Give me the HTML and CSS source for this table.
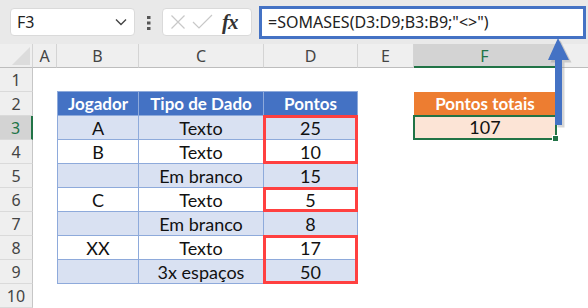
FILE: index.html
```html
<!DOCTYPE html>
<html>
<head>
    <meta charset="utf-8">
    <title>SOMASES - diferente de vazio</title>
    <link rel="stylesheet" href="styles.css">
</head>
<body>
    <div class="toolbar">
        <div class="namebox">
            <span>F3</span>
            <svg class="chevron" width="12" height="8" viewBox="0 0 12 8"><path d="M1 1.5 L6 6.5 L11 1.5" fill="none" stroke="#444" stroke-width="1.4"/></svg>
        </div>
        <svg class="dots" width="4" height="14" viewBox="0 0 4 14"><rect x="0" y="0" width="3.5" height="3" fill="#555"/><rect x="0" y="5.5" width="3.5" height="3" fill="#555"/><rect x="0" y="11" width="3.5" height="3" fill="#555"/></svg>
        <div class="fxbox">
            <svg width="16" height="16" viewBox="0 0 16 16"><path d="M1.5 1.5 L14.5 14.5 M14.5 1.5 L1.5 14.5" stroke="#c8c8c8" stroke-width="1.2"/></svg>
            <svg width="21" height="16" viewBox="0 0 21 16"><path d="M1 8 L7 14 L20 1" fill="none" stroke="#c8c8c8" stroke-width="1.2"/></svg>
            <span class="fx">fx</span>
        </div>
        <div class="formula">=SOMASES(D3:D9;B3:B9;"&lt;&gt;")</div>
    </div>

    <div class="sheet">
        <div class="corner"><svg width="26" height="18" viewBox="0 0 26 18"><path d="M26 0 L26 18 L8 18 Z" fill="#dcdcdc"/></svg></div>
        <div class="colhead">A</div>
        <div class="colhead">B</div>
        <div class="colhead">C</div>
        <div class="colhead">D</div>
        <div class="colhead">E</div>
        <div class="colhead active">F</div>
        <div class="colhead last"></div>

        <!-- linha 1 -->
        <div class="rowhead">1</div>
        <div></div><div></div><div></div><div></div><div></div><div></div><div></div>

        <!-- linha 2: cabeçalhos -->
        <div class="rowhead">2</div>
        <div></div>
        <div class="cell th first top">Jogador</div>
        <div class="cell th top">Tipo de Dado</div>
        <div class="cell th top">Pontos</div>
        <div></div>
        <div class="total-head">Pontos totais</div>
        <div></div>

        <div class="rowhead active">3</div>
        <div></div>
        <div class="cell band first">A</div>
        <div class="cell band">Texto</div>
        <div class="cell band hl hl-top">25</div>
        <div></div>
        <div class="total-val">107</div>
        <div></div>

        <div class="rowhead">4</div>
        <div></div>
        <div class="cell first">B</div>
        <div class="cell">Texto</div>
        <div class="cell hl hl-bottom">10</div>
        <div></div><div></div><div></div>

        <div class="rowhead">5</div>
        <div></div>
        <div class="cell band first"></div>
        <div class="cell band">Em branco</div>
        <div class="cell band">15</div>
        <div></div><div></div><div></div>

        <div class="rowhead">6</div>
        <div></div>
        <div class="cell first">C</div>
        <div class="cell">Texto</div>
        <div class="cell hl">5</div>
        <div></div><div></div><div></div>

        <div class="rowhead">7</div>
        <div></div>
        <div class="cell band first"></div>
        <div class="cell band">Em branco</div>
        <div class="cell band">8</div>
        <div></div><div></div><div></div>

        <div class="rowhead">8</div>
        <div></div>
        <div class="cell first">XX</div>
        <div class="cell">Texto</div>
        <div class="cell hl hl-top">17</div>
        <div></div><div></div><div></div>

        <div class="rowhead">9</div>
        <div></div>
        <div class="cell band first"></div>
        <div class="cell band">3x espaços</div>
        <div class="cell band hl hl-bottom">50</div>
        <div></div><div></div><div></div>

        <div class="rowhead">10</div>
        <div></div><div></div><div></div><div></div><div></div><div></div><div></div>
    </div>

    <!-- seta apontando para a fórmula -->
    <svg class="arrow" width="40" height="100" viewBox="0 0 40 100">
        <path d="M19 9 L30 31 L23 31 L23 96 L16 96 L16 31 L9 31 Z" fill="#8a8a8a" opacity="0.35" transform="translate(1.5 1.5)"/>
        <path d="M18 8 L29 30 L22 30 L22 95 L15 95 L15 30 L8 30 Z" fill="#4472c4"/>
    </svg>
</body>
</html>
```

FILE: styles.css
```css
/* Planilha estilo Excel */
body {
    margin: 0;
    width: 588px;
    height: 308px;
    overflow: hidden;
    position: relative;
    background: #fff;
    font-family: "Noto Sans", sans-serif;
}

.toolbar {
    height: 44px;
    background-color: #e9e9e9;
    display: flex;
    align-items: flex-start;
    padding-top: 8px;
    box-sizing: border-box;
}

.namebox {
    margin-left: 10px;
    width: 125px;
    height: 28px;
    background: #fff;
    border: 1px solid #dadada;
    border-radius: 4px;
    box-sizing: border-box;
    display: flex;
    align-items: center;
    justify-content: space-between;
    padding: 0 7px 0 6px;
    font-size: 16px;
    color: #222;
}

.dots {
    margin: 8px 11px 0 12px;
}

.fxbox {
    width: 90px;
    height: 28px;
    background: #fff;
    border: 1px solid #dadada;
    border-radius: 4px;
    box-sizing: border-box;
    display: flex;
    align-items: center;
    gap: 6px;
    padding-left: 7px;
}

.fx {
    font-family: "Liberation Serif", serif;
    font-style: italic;
    font-weight: bold;
    font-size: 21px;
    color: #333;
    margin-left: 3px;
    letter-spacing: -1px;
}

.formula {
    margin-left: 7px;
    flex: 1;
    margin-right: 2px;
    height: 33px;
    margin-top: -2px;
    background: #fff;
    border: 3px solid #4472c4;
    box-sizing: border-box;
    padding-left: 6px;
    font-size: 16px;
    line-height: 26px;
    color: #222;
}

.sheet {
    display: grid;
    grid-template-columns: 33px 24px 82px 125px 94px 56px 142px 1fr;
    grid-template-rows: repeat(11, 24px);
}

.corner {
    background: #efefef;
    border-right: 1px solid #d4d4d4;
    border-bottom: 1px solid #bdbdbd;
    display: flex;
    align-items: flex-end;
    justify-content: flex-end;
    padding: 0 2px 2px 0;
    box-sizing: border-box;
}

.colhead {
    background: #efefef;
    border-right: 1px solid #d4d4d4;
    border-bottom: 1px solid #bdbdbd;
    text-align: center;
    font-size: 16px;
    line-height: 24px;
    color: #444;
}

.colhead.last {
    border-right: none;
}

.colhead.active {
    background: #d3d3d3;
    color: #217346;
    border-bottom: 2px solid #217346;
}

.rowhead {
    background: #efefef;
    border-right: 1px solid #c6c6c6;
    border-bottom: 1px solid #dadada;
    text-align: center;
    font-size: 16px;
    line-height: 24px;
    color: #444;
}

.rowhead.active {
    background: #d3d3d3;
    color: #217346;
    border-right: 2px solid #217346;
}

/* tabela de dados */
.cell {
    position: relative;
    border-right: 1px solid #8eaadb;
    border-bottom: 1px solid #8eaadb;
    text-align: center;
    font-family: Lato, sans-serif;
    font-size: 18px;
    line-height: 24px;
    color: #111;
}

.cell.first {
    border-left: 1px solid #8eaadb;
}

.cell.top {
    border-top: 1px solid #8eaadb;
    margin-top: -1px;
}

.cell.band {
    background-color: #d9e1f2;
}

.cell.th {
    background-color: #4472c4;
    color: #fff;
    font-weight: bold;
    font-size: 17px;
}

/* contornos vermelhos */
.hl::after {
    content: "";
    position: absolute;
    left: -1px;
    right: -1px;
    top: -1px;
    bottom: -1px;
    border: 3px solid #ff4040;
}

.hl-top::after {
    border-bottom: none;
    bottom: -2px;
}

.hl-bottom::after {
    border-top: none;
    top: 0;
}

.total-head {
    background-color: #ed7d31;
    color: #fff;
    font-family: Lato, sans-serif;
    font-weight: bold;
    font-size: 17px;
    line-height: 24px;
    text-align: center;
}

.total-val {
    position: relative;
    background-color: #fce4d6;
    font-family: Lato, sans-serif;
    font-size: 18px;
    line-height: 21px;
    text-align: center;
    color: #111;
    border: 2px solid #217346;
    margin: -1px -1px 0 -1px;
}

.total-val::after {
    content: "";
    position: absolute;
    right: -4px;
    bottom: -4px;
    width: 5px;
    height: 5px;
    background: #217346;
    border: 1px solid #fff;
}

.arrow {
    position: absolute;
    left: 540px;
    top: 30px;
}
```
